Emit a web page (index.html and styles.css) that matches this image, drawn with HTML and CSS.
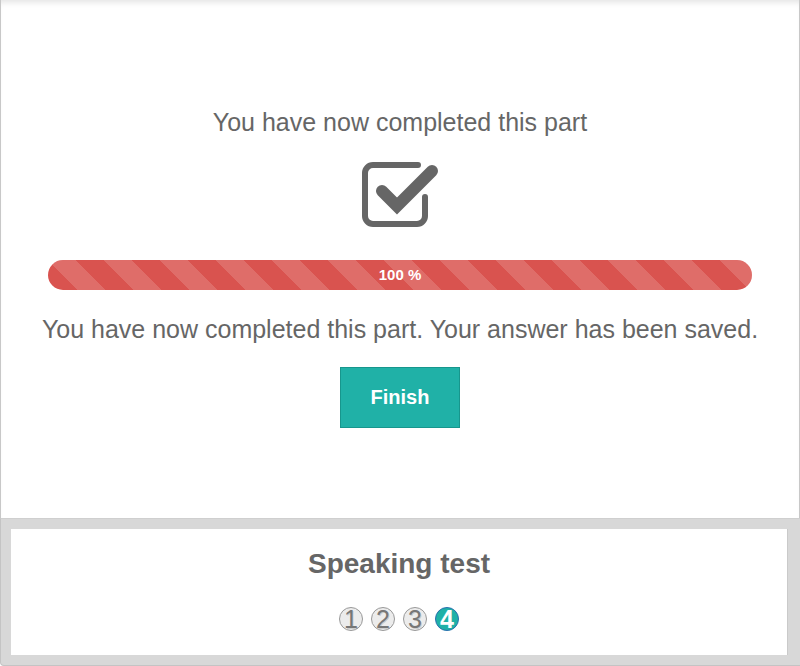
FILE: index.html
```html
<!DOCTYPE html>
<html>
<head>
<meta charset="utf-8">
<link rel="stylesheet" href="styles.css">
</head>
<body>
<div class="page">
  <main class="main">
    <p class="heading">You have now completed this part</p>
    <svg class="icon" width="80" height="70" viewBox="0 0 80 70">
      <path d="M58 5 H13 a8 8 0 0 0 -8 8 V56 a8 8 0 0 0 8 8 H57 a8 8 0 0 0 8 -8 V37" fill="none" stroke="#666" stroke-width="6" stroke-linecap="round"/>
      <path d="M22 31 L37 46 L72 11" fill="none" stroke="#666" stroke-width="12" stroke-linecap="round" stroke-linejoin="miter"/>
    </svg>
    <div class="progress"><div class="bar" style="width:100%">100 %</div></div>
    <p class="saved">You have now completed this part. Your answer has been saved.</p>
    <button class="finish">Finish</button>
  </main>
  <footer class="footer">
    <div class="footer-inner">
      <h2 class="title">Speaking test</h2>
      <div class="steps">
        <span class="step">1</span>
        <span class="step">2</span>
        <span class="step">3</span>
        <span class="step active">4</span>
      </div>
    </div>
  </footer>
</div>
</body>
</html>
```
FILE: styles.css
```css
html, body {
  margin: 0;
  padding: 0;
  background: #fff;
}
body {
  font-family: "Liberation Sans", Arial, sans-serif;
  color: #666;
}
.page {
  width: 800px;
  height: 666px;
  display: flex;
  flex-direction: column;
}
.main {
  height: 518px;
  box-sizing: border-box;
  border-left: 1px solid #c8c8c8;
  border-right: 1px solid #c8c8c8;
  box-shadow: inset 0 6px 6px -4px rgba(0,0,0,0.12);
  display: flex;
  flex-direction: column;
  align-items: center;
  padding-top: 107px;
}
.heading {
  margin: 0;
  font-size: 25px;
  line-height: 30px;
}
.icon {
  display: block;
  margin-top: 23px;
}
.progress {
  margin-top: 30px;
  width: 704px;
  height: 30px;
  border-radius: 15px;
  overflow: hidden;
  background: #f5f5f5;
}
.bar {
  height: 100%;
  background-color: #d9534f;
  background-image: linear-gradient(45deg, rgba(255,255,255,.15) 25%, transparent 25%, transparent 50%, rgba(255,255,255,.15) 50%, rgba(255,255,255,.15) 75%, transparent 75%, transparent);
  background-size: 56px 56px;
  color: #fff;
  font-weight: bold;
  font-size: 15px;
  line-height: 30px;
  text-align: center;
}
.saved {
  margin: 24px 0 0;
  font-size: 25px;
  line-height: 30px;
}
.finish {
  margin-top: 23px;
  width: 120px;
  height: 61px;
  background: #20b1a7;
  border: 1px solid #17968d;
  color: #fff;
  font-family: "Liberation Sans", Arial, sans-serif;
  font-weight: bold;
  font-size: 20px;
  padding: 0;
}
.footer {
  height: 148px;
  box-sizing: border-box;
  background: #d8d8d8;
  border-top: 1px solid #cfcfcf;
  border-left: 1px solid #c4c4c4;
  border-bottom: 1px solid #c4c4c4;
  border-radius: 0 0 0 4px;
  padding: 10px 12px 10px 10px;
}
.footer-inner {
  height: 126px;
  background: #fff;
  border-right: 1px solid #cacaca;
  display: flex;
  flex-direction: column;
  align-items: center;
}
.title {
  margin: 20px 0 0;
  font-size: 28px;
  line-height: 30px;
  font-weight: bold;
  color: #666;
}
.steps {
  margin-top: 28px;
  display: flex;
  gap: 8px;
}
.step {
  box-sizing: border-box;
  width: 24px;
  height: 24px;
  border-radius: 50%;
  border: 1px solid #999;
  background: #ececec;
  color: #777;
  font-size: 25px;
  line-height: 24px;
  text-shadow: 1px 1px 0 rgba(0,0,0,0.15);
  display: flex;
  align-items: center;
  justify-content: center;
}
.step.active {
  background: #1fb1a7;
  border-color: #2a6fb0;
  color: #fff;
  font-weight: bold;
  text-shadow: none;
}
```
